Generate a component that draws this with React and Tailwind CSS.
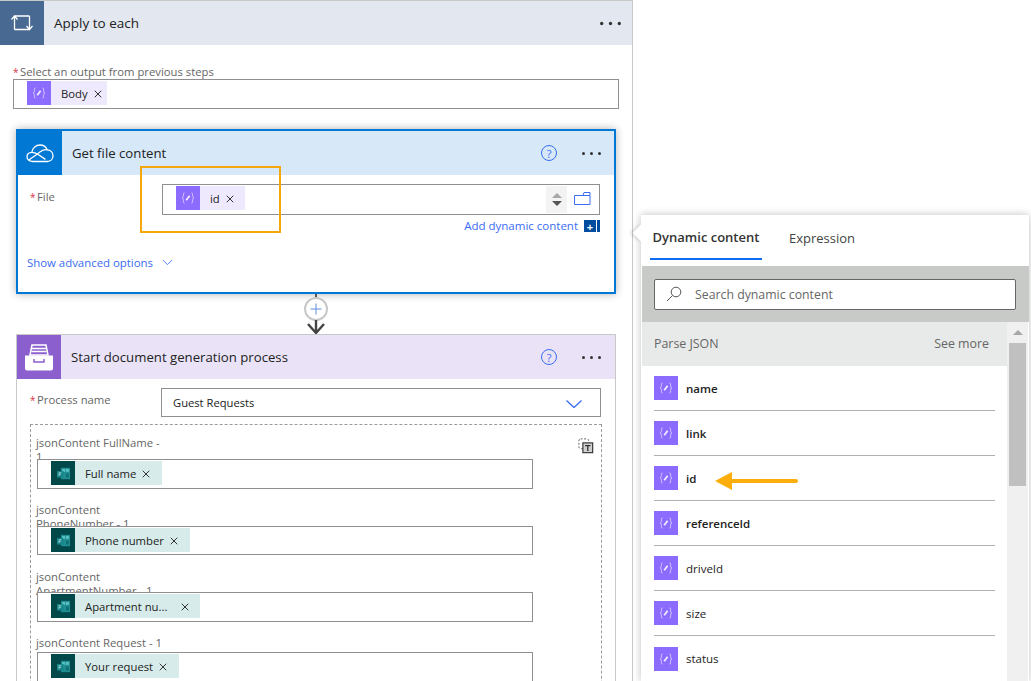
import React from 'react';
import { X, ChevronDown } from 'lucide-react';

const VarIcon = () => (
  <span className="flex h-6 w-6 shrink-0 items-center justify-center bg-[#8c6cff]">
    <svg width="14" height="12" viewBox="0 0 14 12" fill="none" stroke="#d9ceff" strokeWidth="1">
      <path d="M3.5 1C2.2 1 2.4 2 2.4 3.4 2.4 5 2 5.6 1 6 2 6.4 2.4 7 2.4 8.6 2.4 10 2.2 11 3.5 11" />
      <path d="M10.5 1C11.8 1 11.6 2 11.6 3.4 11.6 5 12 5.6 13 6 12 6.4 11.6 7 11.6 8.6 11.6 10 11.8 11 10.5 11" />
      <path d="M5.2 8.2L8.6 3.8" strokeWidth="1.8" stroke="#f1edff" />
    </svg>
  </span>
);

const FormsIcon = () => (
  <span className="flex h-6 w-6 shrink-0 items-center justify-center bg-[#00484a]">
    <svg width="15" height="13" viewBox="0 0 18 16">
      <rect x="6" y="1" width="11" height="14" fill="#1f8f93" />
      <rect x="7.5" y="2.5" width="3.5" height="3.5" fill="#5cc2c4" />
      <rect x="12" y="2.5" width="3.5" height="3.5" fill="#5cc2c4" />
      <rect x="12" y="8" width="3.5" height="5" fill="#0f6f73" />
      <rect x="1" y="5" width="8" height="8" fill="#17858a" />
      <path d="M3.5 7h3M3.5 9h2.5M3.5 7v4" stroke="#a8dcdc" fill="none" />
    </svg>
  </span>
);

const Chip = ({ icon, label, tone, gap = 'gap-[4px]', right = 'pr-[10px]' }) => (
  <span className={`flex h-6 items-center ${tone}`}>
    {icon}
    <span className={`flex items-center ${gap} ${right} pl-[10px] pt-[2px] text-[11.3px] text-[#222222]`}>
      {label}
      <X size={12} strokeWidth={2} className="text-[#333333]" />
    </span>
  </span>
);

const Dots = () => (
  <span className="flex items-center gap-[5px]">
    <span className="h-[3px] w-[3px] rounded-full bg-[#333333]" />
    <span className="h-[3px] w-[3px] rounded-full bg-[#333333]" />
    <span className="h-[3px] w-[3px] rounded-full bg-[#333333]" />
  </span>
);

const Help = () => (
  <span className="flex h-4 w-4 items-center justify-center rounded-full border border-[#3a6cf4] text-[11px] leading-none text-[#3a6cf4]">?</span>
);

const Req = () => <span className="inline-block w-[7px] text-[10px] text-[#d8334a]">*</span>;

const FieldRow = ({ name, chip, top = '', height = 'h-[30px]', labelHeight = 'h-[23px]' }) => (
  <div className={top}>
    <div className={`-ml-px w-[132px] text-[11.3px] leading-[14px] text-[#666666] ${labelHeight}`}>{name}</div>
    <div className={`relative flex w-[496px] items-start border border-[#8f8f8f] bg-white pl-[13px] pt-px ${height}`}>{chip}</div>
  </div>
);

const outputs = [
  { name: 'name', weight: 'font-semibold' },
  { name: 'link', weight: 'font-semibold' },
  { name: 'id', weight: 'font-semibold' },
  { name: 'referenceId', weight: 'font-semibold' },
  { name: 'driveId', weight: 'font-medium' },
  { name: 'size', weight: 'font-medium' },
  { name: 'status', weight: 'font-medium' },
];

export default function App() {
  return (
    <div className="relative h-[681px] w-[1031px] overflow-hidden bg-white font-['Open_Sans','Noto_Sans',sans-serif] text-[#333333]">
      <div className="h-[681px] w-[633px] overflow-hidden border-r border-t border-[#c8c8c8]">
        {/* apply to each */}
        <div className="flex h-[44px] items-center bg-[#e3e7ef]">
          <span className="flex h-[44px] w-[44px] items-center justify-center bg-[#486991]">
            <svg width="22" height="16" viewBox="0 0 22 16" fill="none" stroke="white" strokeWidth="1.3">
              <path d="M3.5 14.5V1H18.5M0.5 4.5L3.5 1 6.5 4.5" />
              <path d="M18.5 1V14.5H3.5M15.5 11L18.5 14.5 21.5 11" />
            </svg>
          </span>
          <span className="ml-[10px] text-[13.5px] text-[#222222]">Apply to each</span>
          <span className="ml-auto mr-[12px] scale-110"><Dots /></span>
        </div>

        <div className="mx-[13px] mt-5 text-[11.3px] leading-[14px] text-[#666666]"><Req />Select an output from previous steps</div>
        <div className="ml-[13px] flex h-[30px] w-[606px] items-start border border-[#8f8f8f] pl-[13px] pt-px">
          <Chip icon={<VarIcon />} label="Body" right="pr-[3px]" tone="bg-[#efe9fd]" />
        </div>

        {/* get file content */}
        <div className="ml-4 mt-5 h-[165px] w-[600px] border-2 border-[#0078d4] shadow-[0_0_8px_rgba(0,0,0,0.3)]">
          <div className="flex h-[44px] items-center bg-[#d7e9f8]">
            <span className="flex h-[44px] w-[44px] items-center justify-center bg-[#0078d4]">
              <svg width="28" height="20" viewBox="0 0 28 20" fill="none" stroke="white" strokeWidth="1.3">
                <path d="M7 18.5C3.5 18.5 1 16.5 1 13.8 1 11.2 3 9.6 5.8 9.4 6.6 5 10 2 14 2c3.4 0 6 1.8 7.2 4.8 3.4.2 5.8 2.8 5.8 6 0 3.3-2.4 5.7-5.6 5.7H7z" />
                <path d="M5.8 9.4c2.2 0 4 .6 5.6 1.6l8 5.4M21.2 6.8c-2.6-.6-5 .2-9.8 4.2L2.8 17" />
              </svg>
            </span>
            <span className="ml-[10px] pt-[2px] text-[13.2px] text-[#222222]">Get file content</span>
            <span className="ml-auto mr-[25px]"><Help /></span>
            <span className="mr-[13px]"><Dots /></span>
          </div>
          <div className="flex pl-[12px] pt-[9px]">
            <div className="w-[132px] pt-[5px] text-[11.3px] leading-[16px] text-[#666666]"><Req />File</div>
            <div className="w-[438px]">
              <div className="flex h-[31px] items-start border border-[#8f8f8f] pl-[13px] pt-px">
                <Chip icon={<VarIcon />} label="id" right="pr-[9px]" tone="bg-[#efe9fd]" />
                <span className="ml-auto mr-[7px] flex h-[27px] w-[21px] flex-col items-center justify-center gap-[3px] bg-[#f3f3f3]">
                  <span className="h-0 w-0 border-x-[5px] border-b-[5px] border-x-transparent border-b-[#a6a6a6]" />
                  <span className="h-0 w-0 border-x-[5px] border-t-[5px] border-x-transparent border-t-[#555555]" />
                </span>
                <svg className="mr-[8px] mt-[6px]" width="17" height="13" viewBox="0 0 17 13" fill="none" stroke="#3a6cf4" strokeWidth="1">
                  <path d="M.5 3.5h15.5v9H.5zM9 3.5L10 .5h6v3" />
                </svg>
              </div>
              <div className="mt-[3px] flex items-center justify-end text-[11.5px] leading-[16px] text-[#3a6cf4]">
                Add dynamic content
                <span className="ml-[6px] flex h-3 w-3 items-center justify-center bg-[#004c9e] text-[11px] font-bold leading-none text-white">+</span>
                <span className="ml-px h-3 w-[3px] bg-[#004c9e]" />
              </div>
            </div>
          </div>
          <div className="mt-5 flex items-center pl-[9px] text-[11.4px] text-[#3a6cf4]">
            Show advanced options
            <ChevronDown size={17} strokeWidth={1.2} className="ml-[6px]" />
          </div>
        </div>

        {/* connector */}
        <div className="ml-4 flex h-[40px] w-[600px] flex-col items-center">
          <svg width="26" height="40" viewBox="0 0 26 40" fill="none">
            <path d="M13 0v4" stroke="#555555" strokeWidth="2" />
            <circle cx="13" cy="15" r="11" stroke="#c8c8c8" strokeWidth="2" fill="white" />
            <path d="M13 9.5v11M7.5 15h11" stroke="#5b8ddb" strokeWidth="1" />
            <path d="M13 26v13M5 30l8 9 8-9" stroke="#444444" strokeWidth="2.4" />
          </svg>
        </div>

        {/* start document generation */}
        <div className="ml-4 h-[400px] w-[600px] border border-[#c8c8c8]">
          <div className="flex h-[44px] items-center bg-[#eae3f8]">
            <span className="flex h-[44px] w-[44px] items-center justify-center bg-[#8c5fcf]">
              <svg width="30" height="30" viewBox="0 0 30 30">
                <path d="M6 13L8 3h14l2 10z" fill="none" stroke="white" strokeWidth="1.5" />
                <path d="M8 6.5h14M7.5 9.5h15" stroke="white" strokeWidth="1.3" />
                <path d="M1 13.5h28v13a2 2 0 0 1-2 2H3a2 2 0 0 1-2-2z" fill="white" />
                <path d="M10 17v3h10v-3" fill="none" stroke="#8c5fcf" strokeWidth="1.5" />
              </svg>
            </span>
            <span className="ml-[10px] pt-[2px] text-[13.2px] text-[#222222]">Start document generation process</span>
            <span className="ml-auto mr-[25px]"><Help /></span>
            <span className="mr-[14px]"><Dots /></span>
          </div>
          <div className="flex pl-[13px] pt-[9px]">
            <div className="w-[131px] pt-1 text-[11.3px] leading-[16px] text-[#666666]"><Req />Process name</div>
            <div className="flex h-[29px] w-[440px] items-center justify-between border border-[#8f8f8f] pl-[11px] pr-[18px] pt-[2px] text-[11.2px] text-[#222222]">
              Guest Requests
              <svg width="16" height="8" viewBox="0 0 16 8" fill="none" stroke="#3a6cf4" strokeWidth="1.3">
                <path d="M.5 .5L8 7.5 15.5 .5" />
              </svg>
            </div>
          </div>
          <div className="relative ml-[13px] mt-[7px] h-[300px] w-[572px] border border-dashed border-[#9a9a9a] px-[6px] pt-[11px]">
            <svg className="absolute right-[7px] top-[13px]" width="16" height="16" viewBox="0 0 18 18" fill="none">
              <rect x="1" y="1" width="11" height="11" rx="2" stroke="#444444" strokeDasharray="2 2" />
              <rect x="5.5" y="5.5" width="11" height="11" fill="#d0d0d0" stroke="#333333" strokeWidth="1.3" />
              <path d="M8 8.5h6M11 8.5v6" stroke="#333333" strokeWidth="1.5" />
            </svg>
            <FieldRow name="jsonContent FullName - 1" chip={<Chip icon={<FormsIcon />} label="Full name" tone="bg-[#d7ecea]" />} />
            <FieldRow top="mt-[14px]" height="h-[29px]" name="jsonContent PhoneNumber - 1" chip={<Chip icon={<FormsIcon />} label="Phone number" tone="bg-[#d7ecea]" />} />
            <FieldRow top="mt-[15px]" labelHeight="h-[22px]" name="jsonContent ApartmentNumber - 1" chip={<Chip icon={<FormsIcon />} label="Apartment nu..." gap="gap-3" right="pr-[9px]" tone="bg-[#d7ecea]" />} />
            <FieldRow top="mt-[14px]" labelHeight="h-4" name="jsonContent Request - 1" chip={<Chip icon={<FormsIcon />} label="Your request" tone="bg-[#d7ecea]" />} />
          </div>
        </div>
      </div>

      {/* overlay: highlight around the file token */}
      <div className="absolute left-[140px] top-[166px] h-[67px] w-[141px] border-2 border-[#f4a80e]" />

      {/* dynamic content flyout */}
      <div className="absolute left-[641px] top-[215px] h-[466px] w-[388px] bg-white shadow-[0_0_8px_rgba(0,0,0,0.25)]">
        <span className="absolute -left-[6px] top-[12px] h-3 w-3 rotate-45 bg-white shadow-[-2px_2px_3px_rgba(0,0,0,0.12)]" />
        <div className="relative flex h-[51px] pl-[9px]">
          <div className="flex h-[45px] w-[112px] items-center justify-center border-b-2 border-[#0f6cf2] pt-[2px] text-[13px] font-semibold text-[#333333]">Dynamic content</div>
          <div className="ml-[27px] flex h-[45px] items-center pt-[2px] text-[13px] text-[#444444]">Expression</div>
        </div>
        <div className="ml-px flex h-[56px] items-center bg-[#c8cac7] px-3">
          <div className="flex h-[31px] w-[362px] items-center rounded-[2px] border border-[#666666] bg-white pl-[11px] text-[12.3px] text-[#666666]">
            <svg width="16" height="16" viewBox="0 0 16 16" fill="none" stroke="#555555">
              <circle cx="10" cy="6" r="4.8" />
              <path d="M6.5 9.5L1 15" />
            </svg>
            <span className="ml-[13px] pt-[2px]">Search dynamic content</span>
          </div>
        </div>
        <div className="ml-px flex">
          <div className="w-[365px]">
            <div className="flex h-[44px] items-center justify-between bg-[#e8eae9] pl-3 pr-[18px] pt-px text-[12.4px] text-[#666666]">
              <span>Parse JSON</span>
              <span>See more</span>
            </div>
            <div className="pl-3 pr-3">
              {outputs.map(({ name, weight }) => (
                <div key={name} className="flex h-[45px] items-center border-b border-[#b0b0b0] last:border-b-0">
                  <VarIcon />
                  <span className={`ml-2 pt-px text-[11.5px] text-[#222222] ${weight}`}>{name}</span>
                  {name === 'id' && (
                    <svg className="ml-[19px] mt-[6px]" width="84" height="18" viewBox="0 0 84 18">
                      <path d="M0 9L17 0v7h64a2 2 0 0 1 0 4H17v7z" fill="#fbae0c" />
                    </svg>
                  )}
                </div>
              ))}
            </div>
          </div>
          <div className="h-[359px] w-[21px] bg-[#f0f0f0] px-[2px]">
            <div className="flex h-[21px] items-center justify-center">
              <span className="h-0 w-0 border-x-[5px] border-b-[5px] border-x-transparent border-b-[#a6a6a6]" />
            </div>
            <div className="h-[143px] bg-[#c0c0c0]" />
          </div>
        </div>
      </div>
    </div>
  );
}
